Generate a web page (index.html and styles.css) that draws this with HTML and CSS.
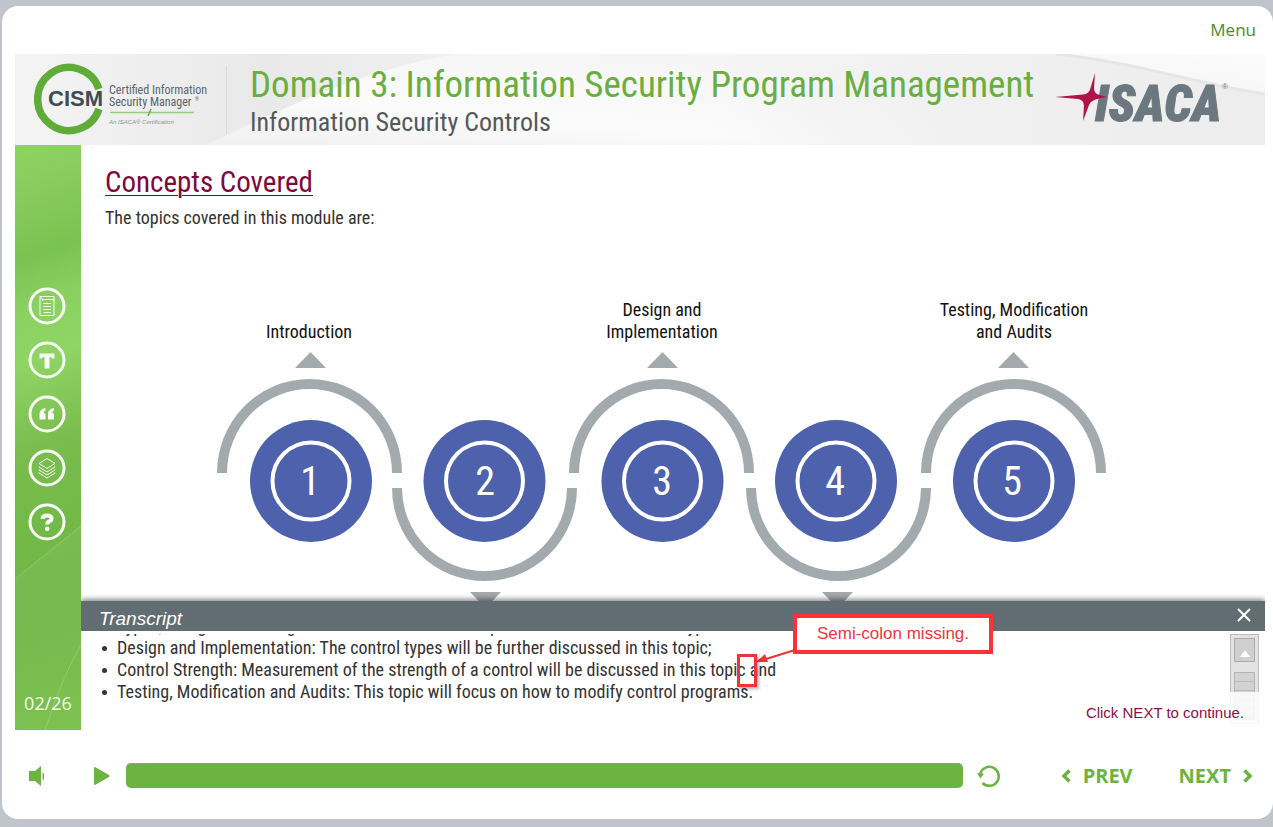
FILE: index.html
```html
<!DOCTYPE html>
<html lang="en">
<head>
<meta charset="utf-8">
<title>Domain 3: Information Security Program Management</title>
<link rel="stylesheet" href="styles.css">
</head>
<body>
<div class="player">
  <nav class="topbar"><a class="menu-link" href="#menu">Menu</a></nav>

  <main class="stage">
    <header class="banner">
      <svg class="banner-art" viewBox="0 0 1249 91" preserveAspectRatio="none" aria-hidden="true">
        <defs>
          <linearGradient id="base" x1="0" y1="0" x2="1" y2="0">
            <stop offset="0" stop-color="#f4f4f4"/><stop offset=".2" stop-color="#e9e9ea"/><stop offset=".4" stop-color="#f2f2f2"/><stop offset="1" stop-color="#fbfbfb"/>
          </linearGradient>
          <linearGradient id="swoosh" x1="0" y1="1" x2="1" y2="0">
            <stop offset="0" stop-color="#f0f0f0"/><stop offset=".3" stop-color="#fbfbfb"/><stop offset=".7" stop-color="#f5f5f5"/><stop offset="1" stop-color="#fbfbfb"/>
          </linearGradient>
          <linearGradient id="tail" x1="0" y1="0" x2="1" y2="0">
            <stop offset="0" stop-color="#ececec" stop-opacity="0"/><stop offset=".5" stop-color="#f0f0f0"/><stop offset="1" stop-color="#ededee"/>
          </linearGradient>
        </defs>
        <rect width="1249" height="91" fill="url(#base)"/>
        <path d="M190 91C260 60 330 20 440 0H1249V91Z" fill="url(#swoosh)"/>
        <path d="M700 0H1040C1120 8 1180 30 1249 40V91H700Z" fill="url(#tail)"/>
        <path d="M1040 0C1120 8 1180 30 1249 40" fill="none" stroke="#e6e6e7" stroke-width="3"/>
      </svg>
      <svg class="cism-logo" viewBox="0 1 180 76" role="img" aria-label="CISM Certified Information Security Manager">
        <path d="M65 28A31.500 31.500 0 1 0 65 48" fill="none" stroke="#5fad38" stroke-width="7.500"/>
        <text class="cism-name" x="14" y="45">CISM</text>
        <text class="cism-line" x="75" y="33">Certified Information</text>
        <text class="cism-line" x="75" y="45">Security Manager</text>
        <text class="cism-reg" x="161" y="40">®</text>
        <path d="M76 51.500H160" stroke="#9ccb86" stroke-width="1.500"/>
        <path d="M117 48L114 55" stroke="#5fad38" stroke-width="1.500"/>
        <text class="cism-tag" x="75" y="63">An ISACA® Certification</text>
      </svg>
      <div class="titles">
        <h1>Domain 3: Information Security Program Management</h1>
        <p>Information Security Controls</p>
      </div>
      <svg class="isaca-logo" viewBox="0 -8 176 70" role="img" aria-label="ISACA">
        <text class="isaca-name" x="40" y="48">ISACA</text>
        <text class="isaca-reg" x="167" y="16">®</text>
        <path d="M0 24L28 21.500Q34 21 35.500 15L40 0L39 15Q39 21 45 22L52 24L44 25.500Q36 27 34 32L28 48L29 33Q29 27 23 26Z" fill="#b3134b"/>
      </svg>
    </header>

    <div class="slide">
      <aside class="sidebar">
        <svg class="sidebar-art" viewBox="0 0 66 585" preserveAspectRatio="none" aria-hidden="true">
          <defs>
            <linearGradient id="g1" x1="0" y1="0" x2="0.04" y2="1">
              <stop offset="0" stop-color="#8ed463"/><stop offset=".1" stop-color="#86cb5c"/><stop offset=".2" stop-color="#7ac251"/><stop offset=".29" stop-color="#8bd162"/><stop offset=".38" stop-color="#8fd565"/><stop offset=".53" stop-color="#78bd4e"/><stop offset=".64" stop-color="#74ba49"/><stop offset=".8" stop-color="#6fb645"/><stop offset="1" stop-color="#74bd47"/>
            </linearGradient>
          </defs>
          <rect width="66" height="585" fill="url(#g1)"/>
          <path d="M0 434L66 381V585H0Z" fill="#fff" fill-opacity=".05"/>
          <path d="M0 434L66 381M30 585Q48 530 66 500" stroke="#fff" stroke-opacity=".2" fill="none"/>
        </svg>
        <div class="tools">
          <button class="tool" type="button" aria-label="Resources">
            <svg viewBox="0 0 38 38"><circle cx="19" cy="19" r="17"/><path class="thin" d="M12 9.500H26V14M12 9.500V28.500H26V12.500H14.500M12 9.500L14.500 12.500V14M15.500 16.500H23M15.500 19.500H23M15.500 22.500H23M15.500 25.500H23"/></svg>
          </button>
          <button class="tool" type="button" aria-label="Transcript">
            <svg viewBox="0 0 38 38"><circle cx="19" cy="19" r="17"/><path class="solid" d="M11.500 12.500H26.500V17.500H24L23 16H21.500V27.500H16.500V16H15L14 17.500H11.500Z"/></svg>
          </button>
          <button class="tool" type="button" aria-label="Glossary">
            <svg viewBox="0 0 38 38"><circle cx="19" cy="19" r="17"/><path class="solid" d="M17.500 13V15.500Q15.700 16 15.700 18.500H17.500V24.500H11.500V19Q11.500 13.800 17.500 13ZM26 13V15.500Q24.200 16 24.200 18.500H26V24.500H20V19Q20 13.800 26 13Z"/></svg>
          </button>
          <button class="tool" type="button" aria-label="Layers">
            <svg viewBox="0 0 38 38"><circle cx="19" cy="19" r="17"/><path class="thin" d="M19 9.500L27 14.500L19 19.500L11 14.500ZM11 17.500V18L19 23L27 18V17.500M11 20.500V21L19 26L27 21V20.500M11 23.500V24L19 29L27 24V23.500"/></svg>
          </button>
          <button class="tool" type="button" aria-label="Help">
            <svg viewBox="0 0 38 38"><circle cx="19" cy="19" r="17"/><path class="mark" d="M14.500 16Q14.500 12.500 19 12.500Q23.500 12.500 23.500 15.500Q23.500 17.500 21 18.500Q19.200 19.300 19.200 21.500"/><circle class="solid" cx="19.200" cy="25.800" r="2.300"/></svg>
          </button>
        </div>
        <p class="page-count">02/26</p>
      </aside>

      <section class="content">
        <div class="intro">
          <h2>Concepts Covered</h2>
          <p>The topics covered in this module are:</p>
        </div>

        <svg class="diagram" viewBox="81 295 1184 306" role="img" aria-label="Module topics">
          <g class="arcs">
            <path d="M222 473A87.500 89 0 0 1 397 473"/>
            <path d="M397 488A87.500 88 0 0 0 572 488"/>
            <path d="M574 473A87.500 89 0 0 1 749 473"/>
            <path d="M751 488A87.500 88 0 0 0 926 488"/>
            <path d="M926 473A87.500 89 0 0 1 1101 473"/>
          </g>
          <g class="arrows">
            <path d="M310.500 352L326 368H295Z"/><path d="M662.500 352L678 368H647Z"/><path d="M1013.500 352L1029 368H998Z"/>
            <path d="M470 592H501L485.500 608Z"/><path d="M822 592H853L837.500 608Z"/>
          </g>
          <g class="discs">
            <circle cx="311" cy="481" r="61"/><circle cx="484.500" cy="481" r="61"/><circle cx="662.500" cy="481" r="61"/><circle cx="836" cy="481" r="61"/><circle cx="1014" cy="481" r="61"/>
          </g>
          <g class="rings">
            <circle cx="311" cy="481" r="38.500"/><circle cx="484.500" cy="481" r="38.500"/><circle cx="662.500" cy="481" r="38.500"/><circle cx="836" cy="481" r="38.500"/><circle cx="1014" cy="481" r="38.500"/>
          </g>
          <g class="numbers">
            <text x="310" y="495">1</text><text x="485" y="495">2</text><text x="662" y="495">3</text><text x="835" y="495">4</text><text x="1012" y="495">5</text>
          </g>
          <g class="labels">
            <text x="309" y="338">Introduction</text>
            <text x="662" y="316">Design and</text><text x="662" y="338">Implementation</text>
            <text x="1014" y="316">Testing, Modification</text><text x="1014" y="338">and Audits</text>
          </g>
        </svg>

        <section class="transcript">
          <header class="transcript-bar">
            <h3>Transcript</h3>
            <button class="close" type="button" aria-label="Close transcript">
              <svg viewBox="0 0 14 14"><path d="M1 1L13 13M13 1L1 13"/></svg>
            </button>
          </header>
          <div class="transcript-body">
            <div class="lines">
              <ul>
                <li>Types, Design and Strength: An introduction to the topics that cover each of the types</li>
                <li>Design and Implementation: The control types will be further discussed in this topic;</li>
                <li>Control Strength: Measurement of the strength of a control will be discussed in this topic and</li>
                <li>Testing, Modification and Audits: This topic will focus on how to modify control programs.</li>
              </ul>
            </div>
            <div class="scrollbar">
              <button class="scroll-up" type="button" aria-label="Scroll up"><svg viewBox="0 0 10 7"><path d="M5 0L10 7H0Z"/></svg></button>
              <div class="scroll-thumb"></div>
            </div>
          </div>
          <p class="hint">Click NEXT to continue.</p>
          <div class="annotation">
            <p class="callout">Semi-colon missing.</p>
            <svg class="pointer" viewBox="0 0 40 20" aria-hidden="true"><path class="shaft" d="M39 2L10 11"/><path d="M0 14L9 6L12 14Z"/></svg>
            <div class="target"></div>
          </div>
        </section>
      </section>
    </div>
  </main>

  <footer class="controls">
    <button class="volume" type="button" aria-label="Volume"><svg viewBox="0 0 16 20"><path d="M0 5H6L12 0V20L6 15H0Z"/><path d="M13.500 7H15V13.500H13.500Z"/></svg></button>
    <button class="play" type="button" aria-label="Play"><svg viewBox="0 0 16 18"><path d="M1 0L15 8Q16 9 15 10L1 18Q0 18 0 17V1Q0 0 1 0Z"/></svg></button>
    <div class="seek" role="progressbar" aria-label="Progress" aria-valuenow="100"></div>
    <button class="replay" type="button" aria-label="Replay"><svg viewBox="0 0 24 24"><path class="loop" d="M3.200 9.500A9.500 9.500 0 1 1 5.500 19"/><path d="M0 9L7 9.500L3.500 14.500Z"/></svg></button>
    <button class="step prev" type="button"><svg viewBox="0 0 10 14"><path d="M8.500 1.500L3 7L8.500 12.500"/></svg>PREV</button>
    <button class="step next" type="button">NEXT<svg viewBox="0 0 10 14"><path d="M1.500 1.500L7 7L1.500 12.500"/></svg></button>
  </footer>
</div>
</body>
</html>
```
FILE: styles.css
```css
* { box-sizing: border-box; }

body {
  margin: 0;
  padding: 6px 0 8px 2px;
  background: #bfc5ca;
  font-family: "Roboto Condensed", "Liberation Sans", sans-serif;
  color: #333;
}

h1, h2, h3, p, ul { margin: 0; padding: 0; font-weight: 400; }
button { border: 0; padding: 0; background: none; font: inherit; color: inherit; cursor: pointer; }
svg { display: block; }

.player {
  display: flex;
  flex-direction: column;
  min-height: calc(100vh - 14px);
  background: #fff;
  border-radius: 16px;
}

.topbar {
  display: flex;
  justify-content: flex-end;
  align-items: center;
  height: 48px;
  padding: 0 17px 2px 0;
}
.menu-link {
  font: 17px "Open Sans", sans-serif;
  color: #4b8b2c;
  text-decoration: none;
}

.stage { flex: 1; display: flex; flex-direction: column; margin: 0 8px 0 13px; }

/* Banner */
.banner {
  position: relative;
  display: flex;
  align-items: center;
  height: 91px;
  padding: 0 34px 0 19px;
}
.banner-art { position: absolute; inset: 0; width: 100%; height: 100%; }
.banner > :not(.banner-art) { position: relative; }
.cism-logo { width: 180px; height: 76px; }
.cism-name { font: bold 22px "Liberation Sans", sans-serif; fill: #3f4b55; }
.cism-line { font-size: 12px; fill: #5a656d; }
.cism-reg { font-size: 5px; fill: #5a656d; }
.cism-tag { font: italic 6px "Liberation Sans", sans-serif; fill: #8b9297; }
.titles {
  flex: 1;
  margin-left: 12px;
  padding: 5px 0 0 24px;
}
.titles::before {
  content: "";
  position: absolute;
  left: 0;
  top: 6px;
  height: 68px;
  border-left: 1px solid #d9dadb;
}
.titles h1 { font-size: 37px; line-height: 40px; color: #6aae40; white-space: nowrap; }
.titles p { font-size: 26px; line-height: 34px; color: #55585a; }
.isaca-logo { width: 176px; height: 70px; }
.isaca-name { font: italic 900 50px "Roboto Condensed", sans-serif; fill: #6b7880; stroke: #6b7880; stroke-width: 1; }
.isaca-reg { font: 8px "Liberation Sans", sans-serif; fill: #6b7880; }

/* Slide */
.slide { flex: 1; display: flex; }
.sidebar {
  position: relative;
  display: flex;
  flex-direction: column;
  align-items: center;
  justify-content: space-between;
  width: 66px;
  padding: 142px 0 14px;
}
.sidebar-art { position: absolute; inset: 0; width: 100%; height: 100%; }
.tools { position: relative; display: flex; flex-direction: column; gap: 16px; padding-right: 2px; }
.tool svg { width: 38px; height: 38px; fill: none; stroke: #f8fcf5; stroke-width: 3; }
.tool .thin { stroke-width: 1; }
.tool .mark { stroke-width: 4; }
.tool .solid { fill: #f8fcf5; stroke: none; }
.page-count { position: relative; font: 18px/26px "Open Sans", sans-serif; color: #f4fbee; }

.content { flex: 1; min-width: 0; display: flex; flex-direction: column; }
.intro { height: 150px; padding: 19px 24px 0; }
.intro h2 {
  font-size: 29px;
  line-height: 36px;
  color: #7d0a3c;
  text-decoration: underline;
  text-decoration-thickness: 1px;
  text-underline-offset: 3px;
}
.intro p { font-size: 18px; line-height: 36px; }

.diagram { width: 100%; flex: 1; }
.arcs { fill: none; stroke: #a3aaae; stroke-width: 10; }
.arrows { fill: #a3aaae; }
.discs { fill: #4e61ac; }
.rings { fill: none; stroke: #fff; stroke-width: 4; }
.numbers { font-size: 40px; fill: #fff; text-anchor: middle; }
.labels { font-size: 18px; fill: #111; text-anchor: middle; }

/* Transcript */
.transcript { position: relative; height: 129px; background: #fff; }
.transcript-bar {
  position: relative;
  display: flex;
  align-items: center;
  justify-content: space-between;
  height: 30px;
  padding: 5px 14px 0 18px;
  background: #626d73;
  box-shadow: 0 -2px 5px rgba(0, 0, 0, .45);
  clip-path: inset(-8px 0 0 0);
  color: #fff;
}
.transcript-bar h3 { font: italic 19px "Liberation Sans", sans-serif; }
.close svg { width: 14px; height: 14px; margin-bottom: 8px; fill: none; stroke: #fff; stroke-width: 2; }
.transcript-body { display: flex; justify-content: space-between; padding: 3px 6px 0 21px; }
.lines { height: 72px; overflow: hidden; display: flex; align-items: flex-end; }
.lines ul { list-style: none; padding-bottom: 3px; }
.lines li { display: flex; align-items: center; gap: 10px; font-size: 18px; line-height: 22px; white-space: nowrap; }
.lines li::before { content: ""; width: 5px; height: 5px; border-radius: 50%; background: #333; }
.scrollbar {
  display: flex;
  flex-direction: column;
  gap: 10px;
  width: 29px;
  height: 90px;
  padding: 3px;
  background: #e3e3e3;
  border: 1px solid #bdbdbd;
  -webkit-mask-image: linear-gradient(#000 58px, rgba(0, 0, 0, .15) 58px);
  mask-image: linear-gradient(#000 58px, rgba(0, 0, 0, .15) 58px);
}
.scroll-up { height: 24px; border: 1px solid #aaa; background: #cfcfcf; }
.scroll-up svg { width: 10px; height: 7px; margin: 6px auto 0; fill: #fff; }
.scroll-thumb {
  flex: 1;
  border: 1px solid #b4b4b4;
  background: repeating-linear-gradient(#d2d2d2 0 8px, #bcbcbc 8px 9px);
}
.hint {
  position: absolute;
  right: 21px;
  bottom: 7px;
  font: 15px/20px "Liberation Sans", sans-serif;
  color: #8c1048;
}

/* Review mark-up drawn over the transcript */
.annotation { position: absolute; left: 656px; top: 13px; width: 256px; height: 73px; }
.callout {
  position: absolute;
  right: 0;
  top: 0;
  width: 200px;
  border: 4px solid #fb3335;
  background: #fff;
  font: 17px/32px "Liberation Sans", sans-serif;
  color: #e8393b;
  text-align: center;
}
.pointer { position: absolute; left: 19px; top: 34px; width: 40px; height: 20px; fill: #ee3436; }
.pointer .shaft { stroke: #ee3436; stroke-width: 2; }
.target {
  position: absolute;
  left: 0;
  bottom: 0;
  width: 20px;
  height: 33px;
  border: 3px solid #ee3436;
  box-shadow: 2px 2px 3px rgba(0, 0, 0, .3);
}

/* Player controls */
.controls {
  display: flex;
  align-items: center;
  height: 89px;
  padding: 2px 20px 0 27px;
  color: #6cb33f;
  fill: #6cb33f;
}
.volume svg { width: 16px; height: 20px; }
.play { margin-left: 49px; }
.play svg { width: 16px; height: 18px; }
.seek {
  flex: 1;
  height: 25px;
  margin: 0 14px 0 16px;
  border-radius: 5px;
  border-top: 1px solid #8f9f86;
  background: #6cb33f;
}
.replay svg { width: 24px; height: 24px; }
.replay .loop { fill: none; stroke: #6cb33f; stroke-width: 2.5; }
.step { display: flex; align-items: center; gap: 12px; font: 700 20px/26px "Open Sans", sans-serif; }
.step svg { width: 10px; height: 14px; fill: none; stroke: #6cb33f; stroke-width: 3.5; }
.prev { margin-left: 60px; }
.next { margin-left: 46px; }
```
